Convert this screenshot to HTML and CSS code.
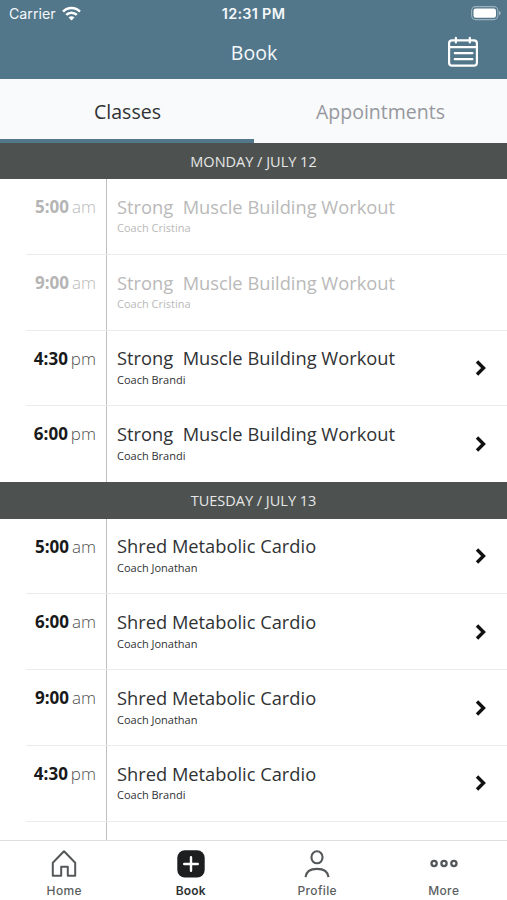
FILE: index.html
```html
<!DOCTYPE html>
<html lang="en">
<head>
<meta charset="utf-8">
<title>Book</title>
<link rel="stylesheet" href="styles.css">
</head>
<body>
<div class="app">
  <header class="top">
    <div class="status">
      <span class="carrier"><span class="carrier-name">Carrier</span>
        <svg class="wifi" width="19" height="15" viewBox="0 0 18 14" fill="none" stroke="#fff" stroke-width="2.4"><path d="M1 5.2C5.4 .7 12.6 .7 17 5.2M4 8.3c2.8-2.8 7.2-2.8 10 0"/><path d="M9 13.6 6.2 10.8c1.5-1.5 4.1-1.5 5.6 0z" fill="#fff" stroke="none"/></svg>
      </span>
      <span class="clock">12:31 PM</span>
      <svg class="battery" width="30" height="15" viewBox="0 0 30 15"><rect x=".6" y=".6" width="26.3" height="13" rx="4" fill="none" stroke="#fff" stroke-opacity=".42" stroke-width="1.1"/><rect x="2.5" y="2.5" width="22.5" height="9.2" rx="2.3" fill="#fff"/><path d="M28 5c2.2.8 2.2 3.4 0 4.2z" fill="#fff" fill-opacity=".5"/></svg>
    </div>
    <div class="bar">
      <h1>Book</h1>
      <svg class="calendar" width="32" height="32" viewBox="0 0 32 32" fill="none" stroke="#fff" stroke-width="2.2" stroke-linecap="round"><rect x="2.1" y="4.3" width="27.8" height="25.4" rx="3"/><path d="M2 11.2h28M8.9 1.8v4.6M22.8 1.8v4.6M7.8 17.2h17.6M7.8 23.2h17.6"/></svg>
    </div>
  </header>
  <nav class="tabs">
    <span class="tab active">Classes</span>
    <span class="tab">Appointments</span>
  </nav>
  <main class="list">
    <h2 class="day">MONDAY / JULY 12</h2>
    <section class="rows">
      <article class="row past"><div class="time"><b>5:00</b><i>am</i></div><div class="info"><h3>Strong&nbsp; Muscle Building Workout</h3><p>Coach Cristina</p></div></article>
      <article class="row past"><div class="time"><b>9:00</b><i>am</i></div><div class="info"><h3>Strong&nbsp; Muscle Building Workout</h3><p>Coach Cristina</p></div></article>
      <article class="row"><div class="time"><b>4:30</b><i>pm</i></div><div class="info"><h3>Strong&nbsp; Muscle Building Workout</h3><p>Coach Brandi</p></div><svg class="chevron" viewBox="0 0 12 18"><path d="m2 2.5 6.5 6.5L2 15.5"/></svg></article>
      <article class="row"><div class="time"><b>6:00</b><i>pm</i></div><div class="info"><h3>Strong&nbsp; Muscle Building Workout</h3><p>Coach Brandi</p></div><svg class="chevron" viewBox="0 0 12 18"><path d="m2 2.5 6.5 6.5L2 15.5"/></svg></article>
    </section>
    <h2 class="day">TUESDAY / JULY 13</h2>
    <section class="rows">
      <article class="row"><div class="time"><b>5:00</b><i>am</i></div><div class="info"><h3>Shred Metabolic Cardio</h3><p>Coach Jonathan</p></div><svg class="chevron" viewBox="0 0 12 18"><path d="m2 2.5 6.5 6.5L2 15.5"/></svg></article>
      <article class="row"><div class="time"><b>6:00</b><i>am</i></div><div class="info"><h3>Shred Metabolic Cardio</h3><p>Coach Jonathan</p></div><svg class="chevron" viewBox="0 0 12 18"><path d="m2 2.5 6.5 6.5L2 15.5"/></svg></article>
      <article class="row"><div class="time"><b>9:00</b><i>am</i></div><div class="info"><h3>Shred Metabolic Cardio</h3><p>Coach Jonathan</p></div><svg class="chevron" viewBox="0 0 12 18"><path d="m2 2.5 6.5 6.5L2 15.5"/></svg></article>
      <article class="row"><div class="time"><b>4:30</b><i>pm</i></div><div class="info"><h3>Shred Metabolic Cardio</h3><p>Coach Brandi</p></div><svg class="chevron" viewBox="0 0 12 18"><path d="m2 2.5 6.5 6.5L2 15.5"/></svg></article>
      <article class="row"><div class="time"></div></article>
    </section>
  </main>
  <footer class="nav">
    <div class="item"><svg width="30" height="30" viewBox="0 0 30 30" fill="none" stroke="#55585a" stroke-width="2"><path d="M3.8 13.8 15 2.3l11.2 11.5v12.9h-7.4v-9h-6.6v9H3.8z" stroke-linejoin="round"/></svg><span>Home</span></div>
    <div class="item current"><svg width="30" height="30" viewBox="0 0 30 30"><rect x="1.3" y="1.3" width="27.4" height="27.2" rx="7.5" fill="#1c1e20"/><path d="M15 8.2v13.6M8.2 15h13.6" stroke="#fff" stroke-width="2.4" stroke-linecap="round"/></svg><span>Book</span></div>
    <div class="item"><svg width="30" height="30" viewBox="0 0 30 30" fill="none" stroke="#55585a" stroke-width="2.1"><rect x="9.5" y="2.3" width="11" height="12" rx="5.5"/><path d="M3.5 28.2c.6-5.3 4-8.3 11.5-8.3s10.9 3 11.5 8.3"/></svg><span>Profile</span></div>
    <div class="item"><svg width="30" height="30" viewBox="0 0 30 30" fill="none" stroke="#55585a" stroke-width="2.3"><circle cx="5.1" cy="14.5" r="2.6"/><circle cx="15" cy="14.5" r="2.6"/><circle cx="24.9" cy="14.5" r="2.6"/></svg><span>More</span></div>
  </footer>
</div>
</body>
</html>
```
FILE: styles.css
```css
* { box-sizing: border-box; }
body { margin: 0; font-family: "Open Sans", sans-serif; color: #303234; background: #fff; }
h1, h2, h3, p { margin: 0; font-weight: 400; }
.app { width: 507px; height: 900px; display: flex; flex-direction: column; overflow: hidden; }
.top { height: 79px; background: #52778b; color: #f5f8fa; flex: none; }
.status { height: 26px; display: grid; grid-template-columns: 1fr auto 1fr; align-items: center; padding: 1px 6px 0 9px; font-family: Inter, sans-serif; }
.carrier { display: flex; align-items: center; gap: 6px; font-size: 14.2px; }
.clock { font-size: 14.4px; font-weight: 600; letter-spacing: .3px; margin-right: 3px; }
.battery { justify-self: end; }
.bar { height: 52px; display: grid; grid-template-columns: 1fr auto 1fr; align-items: center; padding-right: 28px; }
.bar h1 { grid-column: 2; font-size: 19.5px; margin-left: 29px; }
.calendar { justify-self: end; }
.tabs { height: 63.5px; display: flex; background: #f9fafc; flex: none; }
.tab { flex: 1; display: flex; justify-content: center; align-items: center; font-size: 19.5px; color: #96989d; padding-top: 5px; border-bottom: 4px solid transparent; }
.tab.active { color: #303234; border-color: #52778b; padding-left: 1px; }
.list { flex: 1; min-height: 0; overflow: hidden; }
.day { height: 36.6px; background: #4d5251; color: #e6e7e7; text-align: center; font-size: 14.5px; line-height: 37px; }
.row { height: 75.75px; display: flex; position: relative; }
.row::after { content: ""; position: absolute; left: 26px; right: 0; bottom: 0; height: 1px; background: #ebebeb; }
.row:last-child::after { display: none; }
.time { width: 107.4px; flex: none; border-right: 1px solid #bfbfbf; display: flex; justify-content: flex-end; align-items: flex-start; gap: 3px; padding: 15px 10.4px 0 0; font-size: 17px; line-height: 25px; }
.time b { font-weight: 700; color: #18191a; }
.time i { font-style: normal; font-weight: 300; color: #505050; }
.info { flex: 1; padding: 14.7px 0 0 9.6px; }
.info h3 { font-size: 18.3px; line-height: 25px; white-space: nowrap; }
.info p { font-size: 11px; line-height: 16px; margin-top: 1.7px; }
.past .time b { color: #b5b5b5; }
.past .time i, .past h3, .past p { color: #b9b9b9; }
.chevron { width: 12px; height: 18px; margin: 28.5px 20px 0 0; fill: none; stroke: #111; stroke-width: 3.4; }
.nav { height: 60px; flex: none; display: flex; border-top: 1px solid #dedede; background: #fff; padding-left: 1px; }
.item { flex: 1; display: flex; flex-direction: column; align-items: center; padding-top: 8px; font: 500 12px/16px Inter, sans-serif; letter-spacing: .35px; color: #5c5f61; }
.item span { margin-top: 4px; }
.current { font-weight: 600; letter-spacing: .2px; color: #303335; }
```
